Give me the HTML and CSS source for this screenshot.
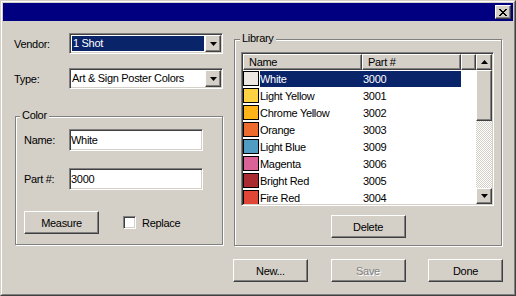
FILE: index.html
```html
<!DOCTYPE html>
<html lang="en">
<head>
    <meta charset="UTF-8">
    <title>Color Library</title>
    <link rel="stylesheet" href="styles.css">
</head>
<body>

<div class="window">
  <div class="frame">
    <div class="titlebar">
        <button class="close-btn">
            <svg width="8" height="7" viewBox="0 0 8 7"><path d="M0 0h2v1H0zM6 0h2v1H6zM1 1h2v1H1zM5 1h2v1H5zM2 2h2v1H2zM4 2h2v1H4zM3 3h2v1H3zM2 4h2v1H2zM4 4h2v1H4zM1 5h2v1H1zM5 5h2v1H5zM0 6h2v1H0zM6 6h2v1H6z" fill="#000"/></svg>
        </button>
    </div>

    <div class="content">
        <div class="left-col">
            <div class="field-row">
                <span class="field-label">Vendor:</span>
                <div class="combo sunken">
                    <span class="combo-text selected">1 Shot</span>
                    <span class="combo-btn raised"><svg width="7" height="4" viewBox="0 0 7 4"><path d="M0 0h7L3.5 4z" fill="#000"/></svg></span>
                </div>
            </div>
            <div class="field-row">
                <span class="field-label">Type:</span>
                <div class="combo sunken">
                    <span class="combo-text">Art &amp; Sign Poster Colors</span>
                    <span class="combo-btn raised"><svg width="7" height="4" viewBox="0 0 7 4"><path d="M0 0h7L3.5 4z" fill="#000"/></svg></span>
                </div>
            </div>

            <div class="group color-group">
                <span class="caption">Color</span>
                <div class="input-row">
                    <span class="input-label">Name:</span>
                    <div class="textbox sunken">White</div>
                </div>
                <div class="input-row part-row">
                    <span class="input-label">Part #:</span>
                    <div class="textbox sunken">3000</div>
                </div>
                <div class="measure-row">
                    <button class="btn raised">Measure</button>
                    <span class="checkbox sunken"></span>
                    <span class="check-label">Replace</span>
                </div>
            </div>
        </div>

        <div class="right-col">
            <div class="group library-group">
                <span class="caption">Library</span>
                <div class="listview sunken">
                    <div class="lv-main">
                        <div class="lv-header">
                            <span class="lv-head raised col-name">Name</span>
                            <span class="lv-head raised col-part">Part #</span>
                            <span class="lv-head raised col-fill"></span>
                        </div>
                        <div class="lv-row">
                            <span class="swatch" style="background:#ece8e1"></span>
                            <span class="cell-name sel">White</span>
                            <span class="cell-part sel">3000</span>
                        </div>
                        <div class="lv-row">
                            <span class="swatch" style="background:#fdd343"></span>
                            <span class="cell-name">Light Yellow</span>
                            <span class="cell-part">3001</span>
                        </div>
                        <div class="lv-row">
                            <span class="swatch" style="background:#fdb418"></span>
                            <span class="cell-name">Chrome Yellow</span>
                            <span class="cell-part">3002</span>
                        </div>
                        <div class="lv-row">
                            <span class="swatch" style="background:#ee6b2e"></span>
                            <span class="cell-name">Orange</span>
                            <span class="cell-part">3003</span>
                        </div>
                        <div class="lv-row">
                            <span class="swatch" style="background:#4f9dc2"></span>
                            <span class="cell-name">Light Blue</span>
                            <span class="cell-part">3009</span>
                        </div>
                        <div class="lv-row">
                            <span class="swatch" style="background:#d96296"></span>
                            <span class="cell-name">Magenta</span>
                            <span class="cell-part">3006</span>
                        </div>
                        <div class="lv-row">
                            <span class="swatch" style="background:#a92c31"></span>
                            <span class="cell-name">Bright Red</span>
                            <span class="cell-part">3005</span>
                        </div>
                        <div class="lv-row">
                            <span class="swatch" style="background:#e04535"></span>
                            <span class="cell-name">Fire Red</span>
                            <span class="cell-part">3004</span>
                        </div>
                    </div>
                    <div class="scrollbar">
                        <span class="sb-btn raised"><svg width="7" height="4" viewBox="0 0 7 4"><path d="M0 4h7L3.5 0z" fill="#000"/></svg></span>
                        <span class="sb-thumb raised"></span>
                        <span class="sb-track"></span>
                        <span class="sb-btn raised"><svg width="7" height="4" viewBox="0 0 7 4"><path d="M0 0h7L3.5 4z" fill="#000"/></svg></span>
                    </div>
                </div>
                <button class="btn raised delete-btn">Delete</button>
            </div>

            <div class="actions">
                <button class="btn raised">New...</button>
                <button class="btn raised disabled">Save</button>
                <button class="btn raised">Done</button>
            </div>
        </div>
    </div>
  </div>
</div>

</body>
</html>
```

FILE: styles.css
```css
* {
    box-sizing: border-box;
}
body {
    margin: 0;
    background-color: #d4d0c8;
    font-family: "Liberation Sans", Arial, sans-serif;
    font-size: 11px;
    letter-spacing: -0.3px;
    color: #000;
}
button {
    font: inherit;
    letter-spacing: inherit;
    color: inherit;
    padding: 0;
    margin: 0;
}

/* classic 3d edges */
.raised {
    background-color: #d4d0c8;
    border: 1px solid;
    border-color: #fff #404040 #404040 #fff;
    box-shadow: inset -1px -1px 0 #808080, inset 1px 1px 0 #d4d0c8;
}
.sunken {
    background-color: #fff;
    border: 1px solid;
    border-color: #808080 #fff #fff #808080;
    box-shadow: inset 1px 1px 0 #404040, inset -1px -1px 0 #d4d0c8;
    padding: 1px;
}

.window {
    width: 516px;
    height: 296px;
    background-color: #d4d0c8;
    border: 1px solid;
    border-color: #d4d0c8 #404040 #404040 #d4d0c8;
}
.frame {
    height: 100%;
    border: 1px solid;
    border-color: #fff #808080 #808080 #fff;
    padding: 1px;
    display: flex;
    flex-direction: column;
}
.titlebar {
    height: 18px;
    background-color: #000080;
    display: flex;
    justify-content: flex-end;
    align-items: center;
    padding-right: 2px;
}
.close-btn {
    width: 16px;
    height: 14px;
    display: flex;
    align-items: center;
    justify-content: center;
    background-color: #d4d0c8;
    border: 1px solid;
    border-color: #fff #404040 #404040 #fff;
    box-shadow: inset -1px -1px 0 #808080;
}

.content {
    flex: 1;
    display: flex;
    padding-left: 11px;
}
.left-col {
    width: 209px;
    padding-top: 12px;
}
.right-col {
    width: 270px;
    margin-left: 10px;
    padding-top: 18px;
}

/* vendor / type */
.field-row {
    display: flex;
    align-items: center;
    height: 21px;
}
.field-row + .field-row {
    margin-top: 14px;
}
.field-label {
    width: 55px;
}
.combo {
    width: 154px;
    height: 21px;
    display: flex;
}
.combo-text {
    flex: 1;
    line-height: 17px;
    padding-left: 1px;
    white-space: nowrap;
    overflow: hidden;
}
.combo-text.selected {
    margin: 1px;
    line-height: 15px;
    background-color: #0a246a;
    color: #fff;
}
.combo-btn {
    width: 16px;
    height: 17px;
    display: flex;
    align-items: center;
    justify-content: center;
}

/* group boxes */
.group {
    position: relative;
    border: 1px solid #808080;
    box-shadow: inset 1px 1px 0 #fff, 1px 1px 0 #fff;
}
.caption {
    position: absolute;
    top: -8px;
    left: 4px;
    padding: 0 2px;
    line-height: 13px;
    background-color: #d4d0c8;
}
.color-group {
    width: 208px;
    height: 129px;
    margin-top: 27px;
    margin-left: 1px;
    padding: 12px 0 0 8px;
}
.input-row {
    display: flex;
    align-items: center;
}
.part-row {
    margin-top: 17px;
}
.input-label {
    width: 45px;
}
.textbox {
    width: 134px;
    height: 22px;
    line-height: 18px;
    padding-left: 1px;
}
.measure-row {
    display: flex;
    align-items: center;
    margin-top: 21px;
}
.btn {
    width: 75px;
    height: 23px;
}
.checkbox {
    width: 13px;
    height: 13px;
    margin-left: 24px;
}
.check-label {
    margin-left: 6px;
}

/* library */
.library-group {
    width: 268px;
    height: 207px;
    margin-left: 1px;
    padding-top: 12px;
}
.library-group .caption {
    left: 5px;
}
.listview {
    width: 253px;
    height: 154px;
    margin-left: 6px;
    display: flex;
}
.lv-main {
    flex: 1;
    overflow: hidden;
}
.lv-header {
    display: flex;
    height: 16px;
}
.lv-head {
    height: 16px;
    line-height: 14px;
    padding-left: 5px;
}
.col-name {
    width: 119px;
}
.col-part {
    width: 99px;
}
.col-fill {
    flex: 1;
}
.lv-row {
    display: flex;
    height: 17px;
    line-height: 16px;
    white-space: nowrap;
}
.swatch {
    width: 16px;
    height: 15px;
    margin-top: 1px;
    margin-right: 1px;
    border: 1px solid #000;
}
.cell-name {
    width: 102px;
    margin-top: 1px;
}
.cell-part {
    width: 99px;
    margin-top: 1px;
    padding-left: 1px;
}
.sel {
    background-color: #0a246a;
    color: #fff;
}
.scrollbar {
    width: 16px;
    display: flex;
    flex-direction: column;
}
.sb-btn {
    height: 16px;
    display: flex;
    align-items: center;
    justify-content: center;
}
.sb-thumb {
    height: 51px;
}
.sb-track {
    flex: 1;
    background: repeating-conic-gradient(#d4d0c8 0 25%, #fff 0 50%) 0 0 / 2px 2px;
}
.delete-btn {
    display: block;
    margin: 9px auto 0;
}

.actions {
    display: flex;
    justify-content: space-between;
    margin-top: 13px;
}
.disabled {
    color: #808080;
    text-shadow: 1px 1px 0 #fff;
}
```
